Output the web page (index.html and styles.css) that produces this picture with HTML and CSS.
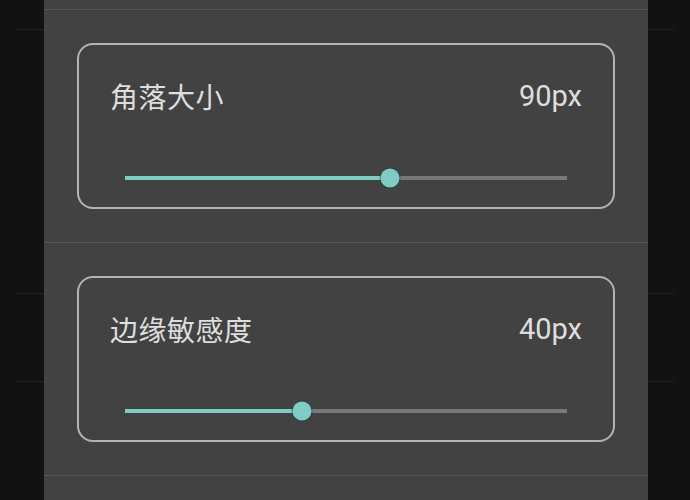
FILE: index.html
```html
<!DOCTYPE html>
<html lang="zh">
<head>
<meta charset="utf-8">
<title>设置</title>
<link rel="stylesheet" href="styles.css">
</head>
<body>
<div class="backdrop">
  <div class="bg-row bg-row-1"></div>
  <div class="bg-row bg-row-2"></div>
  <div class="bg-row bg-row-3"></div>
</div>
<div class="panel">
  <div class="panel-top"></div>
  <section class="section">
    <div class="card">
      <div class="card-head">
        <span class="label">角落大小</span>
        <span class="value">90px</span>
      </div>
      <div class="slider">
        <div class="track">
          <div class="fill" style="width:60%"></div>
          <div class="thumb" style="left:60%"></div>
        </div>
      </div>
    </div>
  </section>
  <section class="section">
    <div class="card">
      <div class="card-head">
        <span class="label">边缘敏感度</span>
        <span class="value">40px</span>
      </div>
      <div class="slider">
        <div class="track">
          <div class="fill" style="width:40%"></div>
          <div class="thumb" style="left:40%"></div>
        </div>
      </div>
    </div>
  </section>
</div>
</body>
</html>
```

FILE: styles.css
```css
html, body {
  margin: 0;
  padding: 0;
  height: 500px;
  overflow: hidden;
}
body {
  background: #121212;
  font-family: Roboto, "Noto Sans CJK SC", sans-serif;
  position: relative;
}
.backdrop {
  padding: 0 16px;
}
.bg-row {
  border-bottom: 1px solid #232323;
}
.bg-row-1 { height: 29px; }
.bg-row-2 { height: 263px; }
.bg-row-3 { height: 87px; }

.panel {
  position: absolute;
  left: 44px;
  top: 0;
  width: 604px;
  height: 500px;
  background: #424242;
}
.panel-top {
  height: 9px;
  border-bottom: 1px solid #595959;
}
.section {
  padding: 33px 33px 33px;
  border-bottom: 1px solid #595959;
}
.card {
  border: 2px solid #b4b4b4;
  border-radius: 16px;
  padding: 34px 31px 19px;
}
.card-head {
  display: flex;
  justify-content: space-between;
  align-items: center;
  height: 34px;
  color: #dedede;
  font-size: 28px;
}
.label {
  font-family: "Noto Sans CJK SC", sans-serif;
  letter-spacing: 0.5px;
}
.value {
  font-family: Roboto, sans-serif;
  font-size: 29px;
}
.slider {
  margin-top: 55px;
  height: 20px;
  padding: 0 15px;
  display: flex;
  align-items: center;
}
.track {
  position: relative;
  flex: 1;
  height: 4px;
  background: #787878;
}
.fill {
  height: 100%;
  background: #80cbc4;
}
.thumb {
  position: absolute;
  top: 50%;
  width: 19px;
  height: 19px;
  border-radius: 50%;
  background: #80cbc4;
  box-shadow: 0 0 0 1px rgba(30, 70, 66, 0.6);
  transform: translate(-50%, -50%);
}
```
